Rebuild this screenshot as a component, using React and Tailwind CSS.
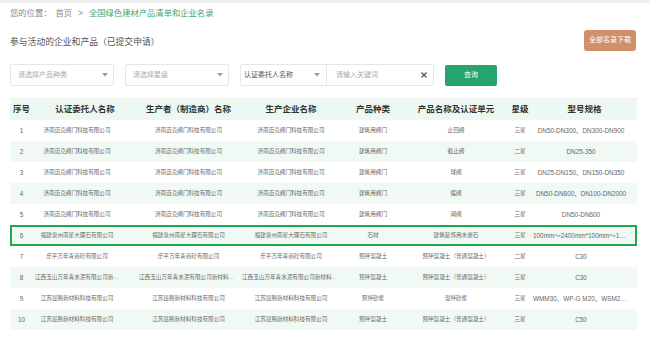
import React from "react";

const cols = "grid grid-cols-[23px_104px_103px_102px_62px_104px_24px_105px]";

const jn = "济南迈克阀门科技有限公司";
const fj = "福建泉州南星大理石有限公司";
const lp = "乐平万年青商砼有限公司";
const jx = "江西玉山万年青水泥有限公司新材料分公司";
const ks = "江苏昆腾新材料科技有限公司";

const rows = [
  ["1", jn, jn, jn, "建筑用阀门", "止回阀", "三星", "DN50-DN300、DN300-DN900"],
  ["2", jn, jn, jn, "建筑用阀门", "截止阀", "二星", "DN25-350"],
  ["3", jn, jn, jn, "建筑用阀门", "球阀", "三星", "DN25-DN150、DN150-DN350"],
  ["4", jn, jn, jn, "建筑用阀门", "蝶阀", "三星", "DN50-DN800、DN100-DN2000"],
  ["5", jn, jn, jn, "建筑用阀门", "闸阀", "三星", "DN50-DN600"],
  ["6", fj, fj, fj, "石材", "建筑装饰用水磨石", "三星", "100mm～2400mm*100mm～1200mm*15mm"],
  ["7", lp, lp, lp, "预拌混凝土", "预拌混凝土（普通混凝土）", "二星", "C30"],
  ["8", jx, jx, jx, "预拌混凝土", "预拌混凝土（普通混凝土）", "三星", "C30"],
  ["9", ks, ks, ks, "预拌砂浆", "湿拌砂浆", "三星", "WMM30、WP-G M20、WSM20、DP-G M10"],
  ["10", ks, ks, ks, "预拌混凝土", "预拌混凝土（普通混凝土）", "三星", "C50"],
];

const heads = ["序号", "认证委托人名称", "生产者（制造商）名称", "生产企业名称", "产品种类", "产品名称及认证单元", "星级", "型号规格"];

function Caret() {
  return (
    <svg width="6" height="4" viewBox="0 0 6 4" className="shrink-0">
      <path d="M0 0h6L3 3.5z" fill="#9a9a9a" />
    </svg>
  );
}

function Select({ label, dark, w }) {
  return (
    <div className={`${w} h-[22px] flex items-center justify-between pl-[7px] pr-[5px] border border-[#e6e6e6] rounded-[2px] bg-white`}>
      <span className={`text-[7px] ${dark ? "text-[#555]" : "text-[#aaa]"}`}>{label}</span>
      <Caret />
    </div>
  );
}

export default function App() {
  return (
    <div className="w-[650px] h-[340px] overflow-hidden bg-white border-t-[3px] border-[#f0f0f0] font-['Liberation_Sans','Noto_Sans_CJK_SC',sans-serif]">
      {/* breadcrumb */}
      <div className="pt-[4px] pl-[10px] h-[16px] text-[8.3px] leading-[12px] text-[#888] flex gap-[4px]">
        <span>您的位置：</span>
        <span>首页</span>
        <span className="px-[2px]">&gt;</span>
        <span className="text-[#3aa86f]">全国绿色建材产品清单和企业名录</span>
      </div>

      {/* title */}
      <div className="mt-[11px] px-[14px] pl-[10px] flex items-center justify-between">
        <h2 className="mt-[4px] text-[8.8px] text-[#555]">参与活动的企业和产品（已提交申请）</h2>
        <button className="w-[52px] h-[21px] rounded-[3px] bg-[#d28f6b] text-white text-[7px]">全部名录下载</button>
      </div>

      {/* filters */}
      <div className="mt-[13px] pl-[10px] flex items-center">
        <Select label="请选择产品种类" w="w-[104px]" />
        <div className="ml-[11px]">
          <Select label="请选择星级" w="w-[104px]" />
        </div>
        <div className="ml-[11px] flex h-[22px] border border-[#e6e6e6] rounded-[2px]">
          <div className="w-[86px] flex items-center justify-between pl-[3px] pr-[6px] border-r border-[#e6e6e6]">
            <span className="text-[7px] text-[#555]">认证委托人名称</span>
            <Caret />
          </div>
          <div className="w-[106px] flex items-center justify-between pl-[9px] pr-[6px]">
            <span className="text-[7px] text-[#aaa]">请输入关键词</span>
            <svg width="6" height="6" viewBox="0 0 6 6">
              <path d="M0.5 0.5l5 5M5.5 0.5l-5 5" stroke="#555" strokeWidth="1.2" />
            </svg>
          </div>
        </div>
        <button className="ml-[11px] w-[52px] h-[21px] rounded-[2px] bg-[#25a46b] text-white text-[7px]">查询</button>
      </div>

      {/* table */}
      <div className="mt-[12px] mx-[10px] w-[627px] border-t border-[#f0f0f0]">
        <div className={`${cols} h-[21px] items-center bg-[#eef8f2] text-[8.5px] font-bold text-[#333] text-center`}>
          {heads.map((h) => (
            <div key={h} className="whitespace-nowrap">{h}</div>
          ))}
        </div>
        {rows.map((r, i) => (
          <div
            key={r[0]}
            className={`${cols} h-[21px] items-center text-[5.6px] text-[#666] ${i % 2 === 1 ? "bg-[#f1f9f5]" : "bg-white"} ${r[0] === "6" ? "outline-2 outline-[#1ea84b] -outline-offset-2" : ""}`}
          >
            {r.map((c, j) => (
              <div
                key={j}
                className={`truncate text-center px-[2px] ${j === 0 || j === 7 ? "text-[6.4px]" : ""} ${j === 7 ? "pl-[1px] pr-[8px]" : ""} ${j === 1 ? "pr-[18px]" : ""}`}
              >
                {c}
              </div>
            ))}
          </div>
        ))}
      </div>
    </div>
  );
}
